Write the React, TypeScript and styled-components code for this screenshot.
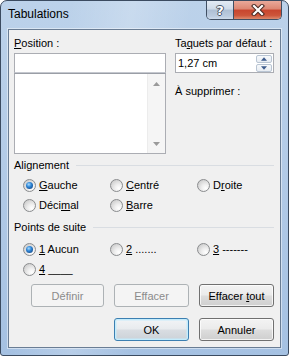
import React, { FC, ReactNode } from 'react';
import styled, { createGlobalStyle, css } from 'styled-components';

const GlobalStyle = createGlobalStyle`
  html, body {
    margin: 0;
    padding: 0;
    background: #ffffff;
  }
  body {
    font-family: 'Liberation Sans', Arial, sans-serif;
    font-size: 11px;
    color: #000000;
  }
`;

const Window = styled.div`
  box-sizing: border-box;
  width: 289px;
  height: 356px;
  display: flex;
  flex-direction: column;
  border: 1px solid #3b4b60;
  border-radius: 7px 7px 3px 3px;
  overflow: hidden;
  background: linear-gradient(
      100deg,
      rgba(255, 255, 255, 0) 20%,
      rgba(255, 255, 255, 0.2) 38%,
      rgba(255, 255, 255, 0) 55%
    ),
    linear-gradient(180deg, #bcd2ea 0%, #b3cbe7 45%, #a5c1e2 100%);
`;

const TitleBar = styled.div`
  height: 28px;
  flex: none;
  display: flex;
  justify-content: space-between;
  align-items: flex-start;
  padding: 0 6px 0 7px;
`;

const Title = styled.div`
  margin-top: 6px;
  font-size: 12px;
  line-height: 14px;
  color: #000000;
`;

const CaptionGroup = styled.div`
  display: flex;
  height: 18px;
  border: 1px solid #404f63;
  border-top: none;
  border-radius: 0 0 5px 5px;
  overflow: hidden;
`;

const CaptionButton = styled.div<{ $close?: boolean }>`
  display: flex;
  align-items: center;
  justify-content: center;
  width: ${p => (p.$close ? 47 : 26)}px;
  ${p =>
    p.$close
      ? css`
          background: linear-gradient(
            180deg,
            #e9a99a 0%,
            #dc8672 45%,
            #c8452e 50%,
            #cd553a 80%,
            #dc8a6e 100%
          );
        `
      : css`
          border-right: 1px solid #404f63;
          background: linear-gradient(
            180deg,
            #e3ebf4 0%,
            #cfdbe9 45%,
            #aebfd4 50%,
            #bccce0 85%,
            #cfdcec 100%
          );
        `}
`;

const HelpGlyph = styled.span`
  font-family: 'DejaVu Sans', sans-serif;
  font-weight: bold;
  font-size: 13px;
  line-height: 13px;
  color: #ffffff;
  text-shadow: 1px 0 0 #4a5566, -1px 0 0 #4a5566, 0 1px 0 #4a5566, 0 -1px 0 #4a5566;
`;

const Client = styled.div`
  flex: 1;
  display: flex;
  flex-direction: column;
  margin: 0 7px 7px;
  padding: 7px 6px 0 5px;
  border: 1px solid #6a7d94;
  box-shadow: 0 0 0 1px rgba(255, 255, 255, 0.45);
  background: #f0f0f0;
`;

const TopRow = styled.div`
  display: flex;
  gap: 9px;
`;

const Column = styled.div<{ $width: number }>`
  display: flex;
  flex-direction: column;
  width: ${p => p.$width}px;
`;

const Label = styled.div<{ $gap?: number }>`
  line-height: 13px;
  margin-top: ${p => p.$gap || 0}px;
  margin-bottom: 3px;
  white-space: nowrap;
`;

const Key = styled.u`
  text-decoration: underline;
  text-underline-offset: 1px;
`;

const TextBox = styled.div`
  box-sizing: border-box;
  height: 20px;
  border: 1px solid #abadb3;
  border-bottom-color: #c5c8cf;
  background: #ffffff;
`;

const ListBox = styled.div`
  box-sizing: border-box;
  height: 81px;
  display: flex;
  justify-content: flex-end;
  border: 1px solid #abadb3;
  border-top-color: #9a9ea6;
  background: #ffffff;
`;

const ScrollStrip = styled.div`
  width: 17px;
  display: flex;
  flex-direction: column;
  justify-content: space-between;
  align-items: center;
  padding: 8px 0 7px;
  background: #f5f5f5;
  border-left: 1px solid #ececec;
`;

const SpinBox = styled.div`
  box-sizing: border-box;
  height: 20px;
  display: flex;
  align-items: center;
  justify-content: space-between;
  padding: 0 1px 0 2px;
  border: 1px solid #abadb3;
  background: #ffffff;
`;

const SpinValue = styled.span`
  line-height: 13px;
`;

const Spinner = styled.div`
  display: flex;
  flex-direction: column;
  width: 16px;
`;

const SpinButton = styled.div`
  box-sizing: border-box;
  height: 8px;
  display: flex;
  align-items: center;
  justify-content: center;
  border: 1px solid #b9c5d3;
  border-radius: 2px;
  background: linear-gradient(180deg, #f7f9fb 0%, #e7ecf2 100%);
  & + & {
    margin-top: 1px;
  }
`;

const Group = styled.div<{ $gap: number }>`
  display: flex;
  flex-direction: column;
  margin-top: ${p => p.$gap}px;
`;

const Heading = styled.div`
  display: flex;
  align-items: center;
  line-height: 13px;
  &::after {
    content: '';
    flex: 1;
    height: 1px;
    margin: 0 0 0 7px;
    background: #d9dde2;
  }
`;

const RadioGrid = styled.div<{ $gap: number }>`
  display: grid;
  grid-template-columns: 87px 87px 1fr;
  grid-auto-rows: 20px;
  margin-top: ${p => p.$gap}px;
  padding-left: 9px;
`;

const RadioItem = styled.div`
  display: flex;
  align-items: center;
  gap: 3px;
  white-space: pre;
`;

const RadioCircle = styled.span<{ $checked?: boolean }>`
  box-sizing: border-box;
  width: 13px;
  height: 13px;
  flex: none;
  display: flex;
  align-items: center;
  justify-content: center;
  border-radius: 50%;
  border: 1px solid #8a8c8e;
  background: radial-gradient(
    circle at 70% 75%,
    #ffffff 0%,
    #eeeeee 35%,
    #cfcfcf 80%,
    #bdbdbd 100%
  );
  &::after {
    content: '';
    display: ${p => (p.$checked ? 'block' : 'none')};
    width: 7px;
    height: 7px;
    border-radius: 50%;
    background: radial-gradient(
      circle at 40% 35%,
      #a8dcff 0%,
      #2f86d6 40%,
      #1b5699 75%,
      #0e3566 100%
    );
  }
`;

const ButtonRow = styled.div<{ $gap: number }>`
  display: flex;
  justify-content: flex-end;
  gap: 10px;
  margin-top: ${p => p.$gap}px;
`;

const Button = styled.button<{ $width: number; $primary?: boolean }>`
  box-sizing: border-box;
  width: ${p => p.$width}px;
  height: 23px;
  padding: 0;
  font-family: 'Liberation Sans', Arial, sans-serif;
  font-size: 11px;
  color: #000000;
  border: 1px solid #707070;
  border-radius: 3px;
  background: linear-gradient(
    180deg,
    #f3f3f3 0%,
    #ebebeb 48%,
    #dddddd 52%,
    #cfcfcf 100%
  );
  box-shadow: inset 0 0 0 1px rgba(255, 255, 255, 0.75);
  ${p =>
    p.$primary &&
    css`
      border-color: #3c7fb1;
      box-shadow: inset 0 0 0 1px #c4ecfc, inset 0 0 0 2px rgba(196, 236, 252, 0.45);
      background: linear-gradient(
        180deg,
        #f2f4f6 0%,
        #e8ebee 48%,
        #d9dde2 52%,
        #ccd2d8 100%
      );
    `}
  &:disabled {
    color: #8b8b8b;
    border-color: #adb2b5;
    background: #f4f4f4;
    box-shadow: none;
  }
`;

const Arrow: FC<{ up?: boolean; color: string; width?: number }> = ({
  up,
  color,
  width = 7,
}) => (
  <svg width={width} height={4} viewBox="0 0 7 4">
    <path d={up ? 'M0 4 L3.5 0 L7 4 Z' : 'M0 0 L7 0 L3.5 4 Z'} fill={color} />
  </svg>
);

const Radio: FC<{ checked?: boolean; children: ReactNode }> = ({
  checked,
  children,
}) => (
  <RadioItem>
    <RadioCircle $checked={checked} />
    <span>{children}</span>
  </RadioItem>
);

const App: FC = () => {
  return (
    <>
      <GlobalStyle />
      <Window>
        <TitleBar>
          <Title>Tabulations</Title>
          <CaptionGroup>
            <CaptionButton>
              <HelpGlyph>?</HelpGlyph>
            </CaptionButton>
            <CaptionButton $close>
              <svg width="14" height="12" viewBox="0 0 14 12">
                <path
                  d="M3 2 L11 10 M11 2 L3 10"
                  stroke="#4a2a24"
                  strokeWidth="4.2"
                  strokeLinecap="square"
                />
                <path
                  d="M3 2 L11 10 M11 2 L3 10"
                  stroke="#ffffff"
                  strokeWidth="2.2"
                  strokeLinecap="square"
                />
              </svg>
            </CaptionButton>
          </CaptionGroup>
        </TitleBar>
        <Client>
          <TopRow>
            <Column $width={152}>
              <Label>
                <Key>P</Key>osition :
              </Label>
              <TextBox />
              <ListBox>
                <ScrollStrip>
                  <Arrow up color="#9a9a9a" />
                  <Arrow color="#9a9a9a" />
                </ScrollStrip>
              </ListBox>
            </Column>
            <Column $width={99}>
              <Label>
                Ta<Key>q</Key>uets par défaut :
              </Label>
              <SpinBox>
                <SpinValue>1,27 cm</SpinValue>
                <Spinner>
                  <SpinButton>
                    <Arrow up color="#3d5b8c" width={6} />
                  </SpinButton>
                  <SpinButton>
                    <Arrow color="#3d5b8c" width={6} />
                  </SpinButton>
                </Spinner>
              </SpinBox>
              <Label $gap={12}>À supprimer :</Label>
            </Column>
          </TopRow>

          <Group $gap={5}>
            <Heading>Alignement</Heading>
            <RadioGrid $gap={3}>
              <Radio checked>
                <Key>G</Key>auche
              </Radio>
              <Radio>
                <Key>C</Key>entré
              </Radio>
              <Radio>
                D<Key>r</Key>oite
              </Radio>
              <Radio>
                Déci<Key>m</Key>al
              </Radio>
              <Radio>
                <Key>B</Key>arre
              </Radio>
            </RadioGrid>
          </Group>

          <Group $gap={6}>
            <Heading>Points de suite</Heading>
            <RadioGrid $gap={5}>
              <Radio checked>
                <Key>1</Key> Aucun
              </Radio>
              <Radio>
                <Key>2</Key> .......
              </Radio>
              <Radio>
                <Key>3</Key> -------
              </Radio>
              <Radio>
                <Key>4</Key> ____
              </Radio>
            </RadioGrid>
          </Group>

          <ButtonRow $gap={5}>
            <Button $width={73} disabled>
              Définir
            </Button>
            <Button $width={75} disabled>
              Effacer
            </Button>
            <Button $width={75}>
              Effacer <Key>t</Key>out
            </Button>
          </ButtonRow>
          <ButtonRow $gap={11}>
            <Button $width={75} $primary>
              OK
            </Button>
            <Button $width={75}>Annuler</Button>
          </ButtonRow>
        </Client>
      </Window>
    </>
  );
};

export default App;
